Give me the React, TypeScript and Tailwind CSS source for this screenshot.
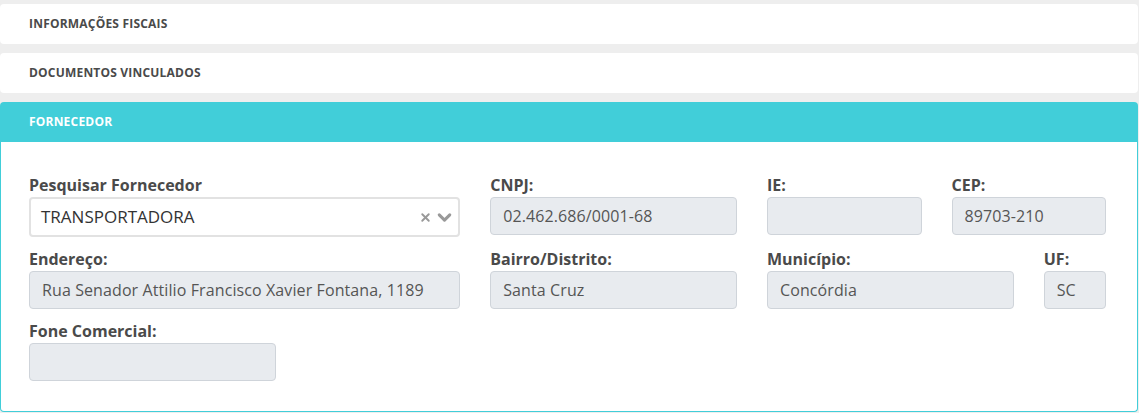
import { ChevronDown, X } from 'lucide-react'

const FONT = { fontFamily: '"Open Sans", "Liberation Sans", sans-serif' }

function Section({ title }: { title: string }) {
  return (
    <div className="h-10 bg-white rounded flex items-center px-[29px]">
      <span className="text-[12px] font-bold uppercase tracking-[0.2px] text-[#4a4a4a]">{title}</span>
    </div>
  )
}

function Field({ label, value, span }: { label: string; value?: string; span: string }) {
  return (
    <div className={`${span} flex flex-col`}>
      <label className="text-[16px] font-bold text-[#4a4a4a] leading-5 h-5 mb-[2px]">{label}</label>
      <div className="h-[38px] rounded bg-[#e8ebef] border border-[#cfd4da] flex items-center px-3 text-[16px] text-[#555] tracking-[0.1px] whitespace-nowrap overflow-hidden">
        {value}
      </div>
    </div>
  )
}

export default function App() {
  return (
    <div className="w-[1139px] h-[413px] bg-[#eeeeee] pt-1 pr-px flex flex-col gap-[9px]" style={FONT}>
      <Section title="Informações Fiscais" />
      <Section title="Documentos Vinculados" />

      <div className="flex flex-col">
        <div className="h-10 bg-[#41ced9] rounded-t flex items-center px-[29px]">
          <span className="text-[12px] font-bold uppercase tracking-[0.2px] text-white">Fornecedor</span>
        </div>
        <div className="bg-white border border-t-0 border-[#41ced9] rounded-b h-[270px] pl-[28px] pr-[31px] pt-[33px]">
          <div className="grid grid-cols-12 gap-x-[30px] gap-y-[12px] items-start">
            <div className="col-span-5 flex flex-col">
              <label className="text-[16px] font-bold text-[#4a4a4a] leading-5 h-5 mb-[2px]">Pesquisar Fornecedor</label>
              <div className="h-10 rounded border-2 border-[#e2e2e2] bg-white flex items-center pl-[10px] pr-[3px]">
                <span className="flex-1 text-[17px] text-[#333]">TRANSPORTADORA</span>
                <X size={13} strokeWidth={3.5} className="text-[#999] mr-[2px]" />
                <ChevronDown size={21} strokeWidth={3.5} className="text-[#999]" />
              </div>
            </div>
            <Field span="col-span-3" label="CNPJ:" value="02.462.686/0001-68" />
            <Field span="col-span-2" label="IE:" />
            <Field span="col-span-2" label="CEP:" value="89703-210" />

            <Field span="col-span-5" label="Endereço:" value="Rua Senador Attilio Francisco Xavier Fontana, 1189" />
            <Field span="col-span-3" label="Bairro/Distrito:" value="Santa Cruz" />
            <Field span="col-span-3" label="Município:" value="Concórdia" />
            <Field span="col-span-1" label="UF:" value="SC" />

            <Field span="col-span-3" label="Fone Comercial:" />
          </div>
        </div>
      </div>
    </div>
  )
}
